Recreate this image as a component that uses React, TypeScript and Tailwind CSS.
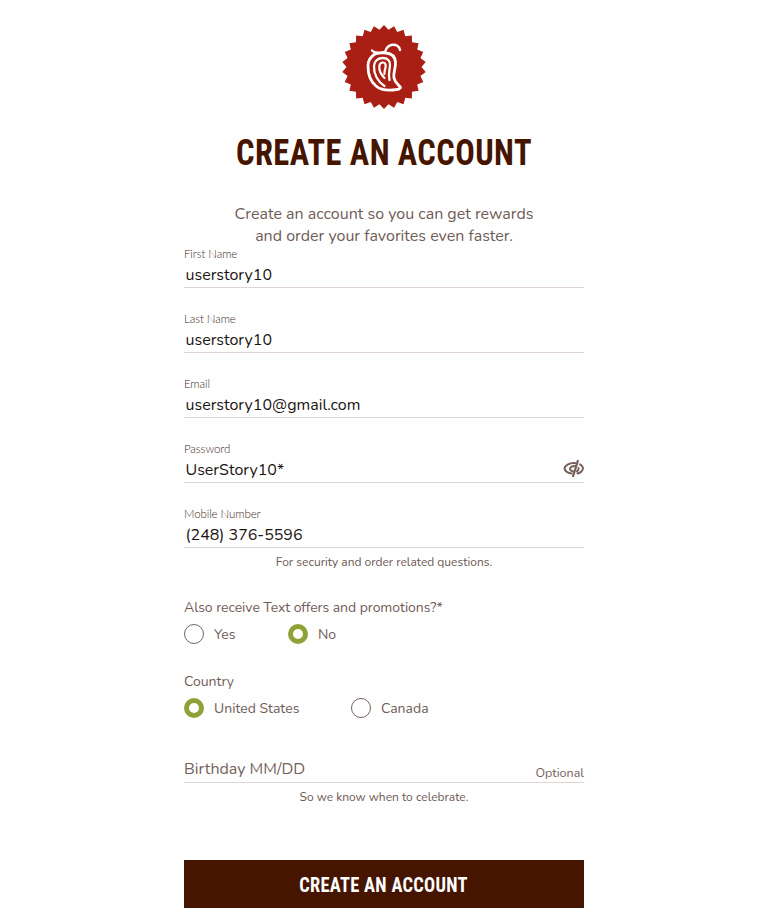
const body = "font-['Nunito','Open_Sans','Noto_Sans',sans-serif]";
const head = "font-['Roboto_Condensed','Roboto',sans-serif]";

function starPoints(n: number, R: number, r: number, c: number) {
  const pts: string[] = [];
  for (let i = 0; i < n * 2; i++) {
    const a = (Math.PI * i) / n - Math.PI / 2;
    const rad = i % 2 === 0 ? R : r;
    pts.push(`${(c + rad * Math.cos(a)).toFixed(2)},${(c + rad * Math.sin(a)).toFixed(2)}`);
  }
  return pts.join(" ");
}

function Logo() {
  return (
    <svg width="84" height="84" viewBox="0 0 84 84" className="block">
      <polygon points={starPoints(26, 42, 37.5, 42)} fill="#a91f14" />
      <g fill="none" stroke="#fff" strokeLinecap="round" strokeLinejoin="round">
        <path strokeWidth="2.8" d="M33 29C28 32 26 36 26 41C26 49 29 57 34 61C38 64.500 45 65.500 51 65C55 64.800 58 64 58.500 62.500C57 60 53 58 52 53C51 48 54 42 53.500 37C53 31 49 28.500 44 28C40 27.500 36 28 33 29Z" />
        <path strokeWidth="2.4" d="M30 25.500C32 28 38 28.500 43 27C44 23.500 46 20.500 50 19.800C54 19.200 57.500 21 58 25" />
        <path strokeWidth="2.3" d="M42.500 61C36 57 31.500 49 32 41C32.300 36 36 33 41 33C45.500 33 48.500 36 48 40.500C47.600 45 46 49 47.500 55" />
        <path strokeWidth="2.2" d="M42.500 53C39 49.500 37 45.500 37.300 41.500C37.500 39 39 37.500 41 37.500C43.500 37.500 44 40 43.500 42.500C43 45 42 47 42.500 49" />
      </g>
    </svg>
  );
}

function Field({ label, value, icon, note }: { label: string; value: string; icon?: boolean; note?: string }) {
  return (
    <div className="h-[65px]">
      <div className="mb-[1px] h-[12px] font-['Lato',sans-serif] text-[11.5px] leading-[9px] font-light tracking-[-0.1px] text-[#3f2a24]">{label}</div>
      <div className="relative flex h-[26px] items-center border-b border-[#dfd3d3] pt-[1px]">
        <span className={`${body} pl-[1.5px] text-[16px] text-[#1c1412]`}>{value}</span>
        {icon && (
          <svg width="21" height="18" viewBox="0 0 21 18" className="absolute right-0 top-[2px]" fill="none" stroke="#75605a" strokeWidth="2" strokeLinecap="round">
            <path d="M8.500 14.500C5 14 2 12 1.500 9.500C2 6.500 6 4 11 4C12 4 13 4.100 14 4.400" />
            <path d="M14.500 14.500C17.500 13.800 20 11.500 20 9C19.500 7 18.500 6 17 5.300" />
            <path d="M10 12.500C8 12 7 11 7 9.500C7.500 8 9.500 7 12 7" />
            <path d="M14 12.500C15 11.500 16 10.500 15.500 9" />
            <path d="M14.800 2L10 17.500" strokeWidth="2.200" />
          </svg>
        )}
      </div>
      {note && <div className={`${body} mt-[6px] text-center text-[12px] leading-[16px] text-[#6c5853]`}>{note}</div>}
    </div>
  );
}

function Radio({ label, checked, className }: { label: string; checked?: boolean; className: string }) {
  return (
    <div className={`flex items-center ${className}`}>
      <span className={`h-[20px] w-[20px] shrink-0 rounded-full bg-white ${checked ? "border-[5.5px] border-[#8fa238]" : "border-[1.5px] border-[#75625c]"}`} />
      <span className={`${body} ml-[10px] text-[14px] text-[#6f5c57]`}>{label}</span>
    </div>
  );
}

export default function App() {
  return (
    <div className="h-[918px] w-[759px] overflow-hidden bg-white">
      <div className="ml-[184px] w-[400px]">
        <div className="flex justify-center pt-[25px]">
          <Logo />
        </div>
        <h1 className={`mt-[24px] scale-x-[0.9] whitespace-nowrap text-center ${head} text-[36px] leading-[40px] font-bold tracking-[0.5px] text-[#451500]`}>
          CREATE AN ACCOUNT
        </h1>
        <p className={`${body} mt-[30px] text-center text-[16px] leading-[22px] text-[#6f5c57]`}>
          Create an account so you can get rewards
          <br />
          and order your favorites even faster.
        </p>
        <div className="mt-[2px]">
          <Field label="First Name" value="userstory10" />
          <Field label="Last Name" value="userstory10" />
          <Field label="Email" value="userstory10@gmail.com" />
          <Field label="Password" value="UserStory10*" icon />
          <Field label="Mobile Number" value="(248) 376-5596" note="For security and order related questions." />
        </div>
        <div className={`${body} mt-[24px] text-[14px] leading-[20px] tracking-[-0.05px] text-[#6f5c57]`}>Also receive Text offers and promotions?*</div>
        <div className="mt-[6px] flex h-[20px]">
          <Radio label="Yes" className="w-[104px]" />
          <Radio label="No" checked className="w-[100px]" />
        </div>
        <div className={`${body} mt-[28px] text-[14px] leading-[20px] text-[#6f5c57]`}>Country</div>
        <div className="mt-[6px] flex h-[20px]">
          <Radio label="United States" checked className="w-[167px]" />
          <Radio label="Canada" className="w-[100px]" />
        </div>
        <div className="mt-[40px] flex h-[25px] items-start justify-between border-b border-[#dfd3d3]">
          <span className={`${body} text-[16px] leading-[22px] text-[#75625c]`}>Birthday MM/DD</span>
          <span className={`${body} mt-[6px] text-[12.5px] leading-[18px] text-[#75625c]`}>Optional</span>
        </div>
        <div className={`${body} mt-[6px] text-center text-[12px] leading-[16px] text-[#6c5853]`}>So we know when to celebrate.</div>
        <div className={`mt-[55px] flex h-[48px] items-center justify-center bg-[#451500] pt-[2px] ${head} text-[20px] font-bold tracking-[0.3px] text-white`}>
          <span className="scale-x-[0.92]">CREATE AN ACCOUNT</span>
        </div>
      </div>
    </div>
  );
}
